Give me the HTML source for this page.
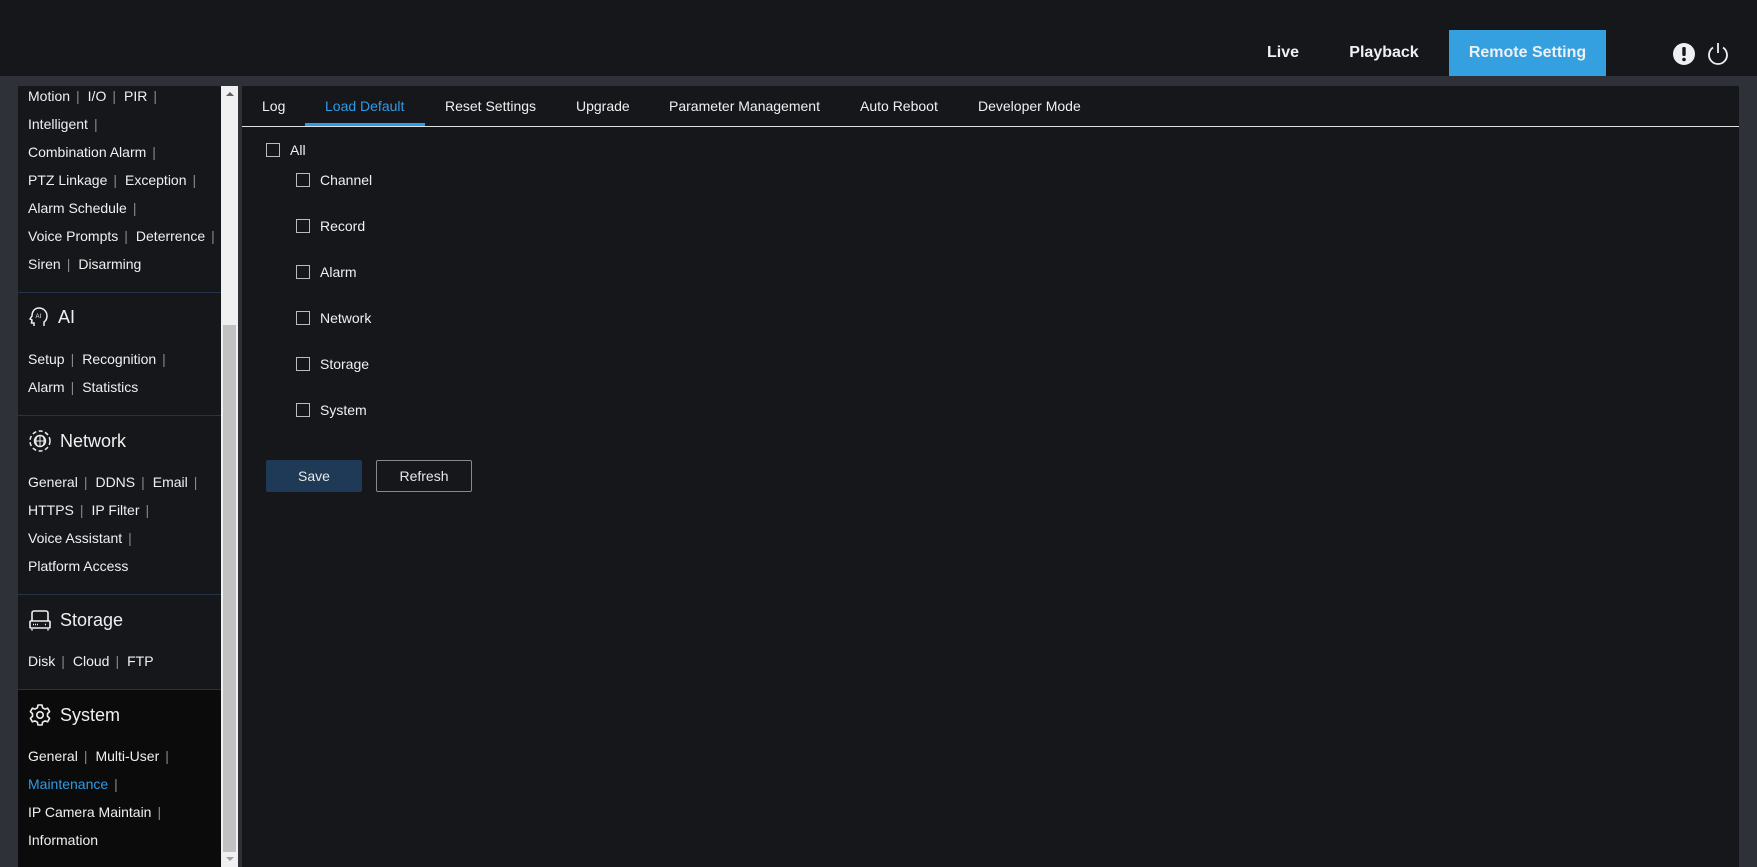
<!DOCTYPE html>
<html><head><meta charset="utf-8"><style>
*{margin:0;padding:0;box-sizing:border-box}
body{width:1757px;height:867px;background:#2e3138;font-family:"Liberation Sans",Arial,sans-serif;color:#e8e8e8;position:relative;overflow:hidden}
.hdr{position:absolute;left:0;top:0;width:1757px;height:76px;background:#16171b}
.nav{position:absolute;top:30px;height:46px;line-height:46px;font-size:16px;font-weight:bold;color:#eef0f4;text-align:center}
.side{position:absolute;left:18px;top:86px;width:203px;height:781px;background:#16171b;overflow:hidden;font-size:14px}
.sb{position:absolute;left:221px;top:86px;width:17px;height:781px;background:#f0f0f0}
.thumb{position:absolute;left:223px;top:325px;width:13px;height:527px;background:#c1c1c1}
.main{position:absolute;left:242px;top:86px;width:1497px;height:781px;background:#16171b}
.l{position:absolute;left:10px;white-space:nowrap;color:#f0f0f0}
.l i{font-style:normal;color:#888;margin:0 8px 0 6px}
.h{position:absolute;left:10px;font-size:18px;color:#f0f0f0;white-space:nowrap;display:flex;align-items:center;gap:8px}
.div{position:absolute;left:0;width:203px;height:1px;background:#253348}
.tab{position:absolute;top:12px;font-size:14px;color:#f0f0f0;white-space:nowrap}
.cb{position:absolute;width:14px;height:14px;border:1px solid #bbb;background:transparent}
.ct{position:absolute;font-size:14px;color:#f0f0f0}
</style></head><body>
<div class="hdr"></div>
<div class="nav" style="left:1250px;width:66px">Live</div>
<div class="nav" style="left:1336px;width:96px">Playback</div>
<div class="nav" style="left:1449px;width:157px;background:#35a0e0">Remote Setting</div>
<svg style="position:absolute;left:1672px;top:42px" width="24" height="24" viewBox="0 0 24 24"><circle cx="12" cy="12" r="11" fill="#eef0f4"/><rect x="10.3" y="5" width="3.4" height="9" rx="1.2" fill="#16171b"/><circle cx="12" cy="17.5" r="1.8" fill="#16171b"/></svg>
<svg style="position:absolute;left:1705px;top:41px" width="26" height="26" viewBox="0 0 26 26"><path d="M8 6.5A9 9 0 1 0 18 6.5" fill="none" stroke="#eef0f4" stroke-width="1.8"/><line x1="13" y1="2" x2="13" y2="12" stroke="#eef0f4" stroke-width="1.8"/></svg>

<div class="side">
<div class="l" style="top:2px">Motion<i>|</i>I/O<i>|</i>PIR<i>|</i></div>
<div class="l" style="top:30px">Intelligent<i>|</i></div>
<div class="l" style="top:58px">Combination Alarm<i>|</i></div>
<div class="l" style="top:86px">PTZ Linkage<i>|</i>Exception<i>|</i></div>
<div class="l" style="top:114px">Alarm Schedule<i>|</i></div>
<div class="l" style="top:142px">Voice Prompts<i>|</i>Deterrence<i>|</i></div>
<div class="l" style="top:170px">Siren<i>|</i>Disarming</div>
<div class="div" style="top:206px"></div>
<div class="h" style="top:220px"><svg width="22" height="22" viewBox="0 0 22 22"><path d="M6 20v-3H3.5l.5-3-2-1 2-3C4 5 7 2 11 2s8 3 8 8c0 3-1.5 5-3 6v4" fill="none" stroke="#eee" stroke-width="1.5"/><text x="7.5" y="12" font-size="6" fill="#eee" font-family="Liberation Sans">AI</text></svg>AI</div>
<div class="l" style="top:265px">Setup<i>|</i>Recognition<i>|</i></div>
<div class="l" style="top:293px">Alarm<i>|</i>Statistics</div>
<div class="div" style="top:329px"></div>
<div class="h" style="top:343px"><svg width="24" height="24" viewBox="0 0 24 24"><circle cx="12" cy="12" r="10" fill="none" stroke="#eee" stroke-width="1.5" stroke-dasharray="4 2.5"/><circle cx="12" cy="12" r="5.5" fill="none" stroke="#eee" stroke-width="1.4"/><path d="M6.5 12h11M12 6.5v11M9 7.5c-1.5 3-1.5 6 0 9M15 7.5c1.5 3 1.5 6 0 9" fill="none" stroke="#eee" stroke-width="1"/></svg>Network</div>
<div class="l" style="top:388px">General<i>|</i>DDNS<i>|</i>Email<i>|</i></div>
<div class="l" style="top:416px">HTTPS<i>|</i>IP Filter<i>|</i></div>
<div class="l" style="top:444px">Voice Assistant<i>|</i></div>
<div class="l" style="top:472px">Platform Access</div>
<div class="div" style="top:508px"></div>
<div class="h" style="top:522px"><svg width="24" height="24" viewBox="0 0 24 24"><path d="M4 13V5a2 2 0 0 1 2-2h12a2 2 0 0 1 2 2v8" fill="none" stroke="#eee" stroke-width="1.6"/><rect x="2" y="13" width="20" height="7" rx="1" fill="none" stroke="#eee" stroke-width="1.6"/><path d="M5 16.5h6M17 16.5h1.5" stroke="#eee" stroke-width="1.5" stroke-dasharray="1 1"/><path d="M4 21v1.5M20 21v1.5" stroke="#eee" stroke-width="1.5"/></svg>Storage</div>
<div class="l" style="top:567px">Disk<i>|</i>Cloud<i>|</i>FTP</div>
<div style="position:absolute;left:0;top:603px;width:203px;height:200px;background:#0b0b0c;border-top:1px solid #253348"></div>
<div class="h" style="top:617px"><svg width="24" height="24" viewBox="0 0 24 24"><path d="M10 2h4l.6 2.8 2.3 1.3 2.7-.9 2 3.5-2.1 1.9v2.8l2.1 1.9-2 3.5-2.7-.9-2.3 1.3L14 22h-4l-.6-2.8-2.3-1.3-2.7.9-2-3.5 2.1-1.9v-2.8L2.4 8.7l2-3.5 2.7.9 2.3-1.3z" fill="none" stroke="#eee" stroke-width="1.6" stroke-linejoin="round"/><circle cx="12" cy="12" r="3.2" fill="none" stroke="#eee" stroke-width="1.6"/></svg>System</div>
<div class="l" style="top:662px">General<i>|</i>Multi-User<i>|</i></div>
<div class="l" style="top:690px"><span style="color:#2e9be6">Maintenance</span><i>|</i></div>
<div class="l" style="top:718px">IP Camera Maintain<i>|</i></div>
<div class="l" style="top:746px">Information</div>
</div>
<div class="sb"></div><div class="thumb"></div>
<svg style="position:absolute;left:225px;top:90px" width="10" height="8"><path d="M1 6L5 2L9 6z" fill="#606060"/></svg>
<svg style="position:absolute;left:225px;top:855px" width="10" height="8"><path d="M1 2L5 6L9 2z" fill="#a0a0a0"/></svg>

<div class="main">
<div class="tab" style="left:20px">Log</div>
<div class="tab" style="left:83px;color:#2e9be6">Load Default</div>
<div class="tab" style="left:203px">Reset Settings</div>
<div class="tab" style="left:334px">Upgrade</div>
<div class="tab" style="left:427px">Parameter Management</div>
<div class="tab" style="left:618px">Auto Reboot</div>
<div class="tab" style="left:736px">Developer Mode</div>
<div style="position:absolute;left:63px;top:37px;width:120px;height:3px;background:#2e9be6"></div>
<div style="position:absolute;left:0;top:40px;width:1497px;height:1px;background:#e0e0e0"></div>
<div class="cb" style="left:24px;top:57px"></div><div class="ct" style="left:48px;top:56px">All</div>
<div class="cb" style="left:54px;top:87px"></div><div class="ct" style="left:78px;top:86px">Channel</div>
<div class="cb" style="left:54px;top:133px"></div><div class="ct" style="left:78px;top:132px">Record</div>
<div class="cb" style="left:54px;top:179px"></div><div class="ct" style="left:78px;top:178px">Alarm</div>
<div class="cb" style="left:54px;top:225px"></div><div class="ct" style="left:78px;top:224px">Network</div>
<div class="cb" style="left:54px;top:271px"></div><div class="ct" style="left:78px;top:270px">Storage</div>
<div class="cb" style="left:54px;top:317px"></div><div class="ct" style="left:78px;top:316px">System</div>
<div style="position:absolute;left:24px;top:374px;width:96px;height:32px;background:#1e3a56;border-radius:2px;text-align:center;line-height:32px;font-size:14px">Save</div>
<div style="position:absolute;left:134px;top:374px;width:96px;height:32px;border:1px solid #888;border-radius:2px;text-align:center;line-height:30px;font-size:14px">Refresh</div>
</div>
</body></html>
